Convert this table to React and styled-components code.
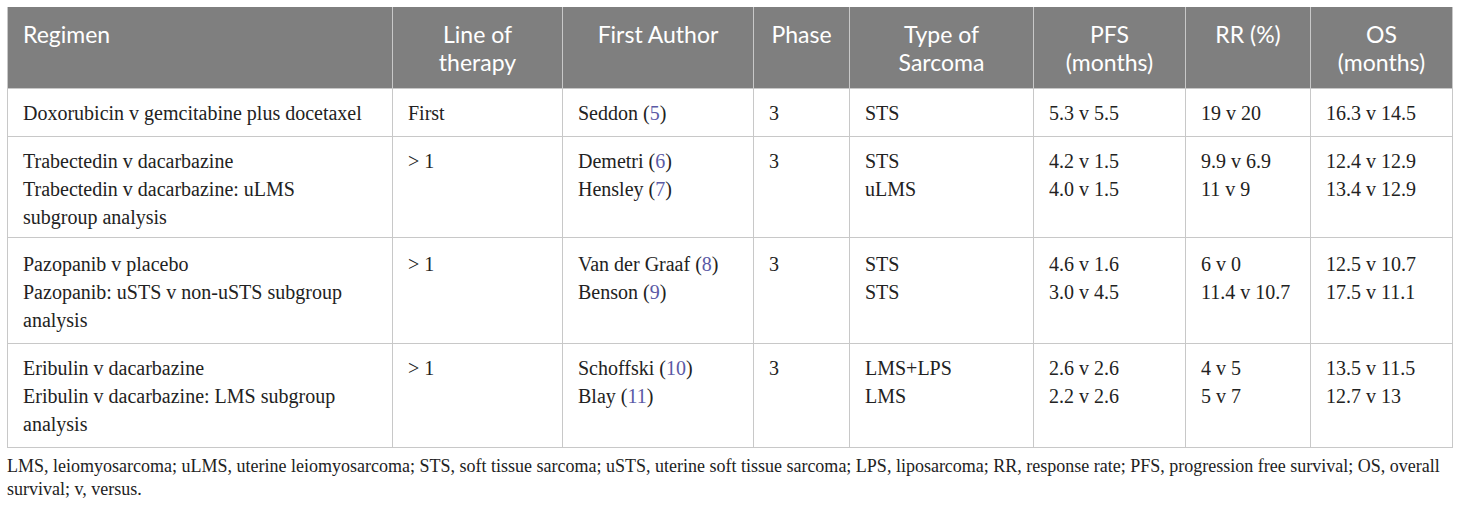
import React from 'react'
import styled, { createGlobalStyle } from 'styled-components'

const GlobalStyle = createGlobalStyle`
    html, body {
        margin: 0;
        padding: 0;
        background: #fff;
    }
`

const Wrapper = styled.div`
    width: 1460px;
    box-sizing: border-box;
    padding: 7px 8px 0 7px;
    background: #fff;
`

const Table = styled.table`
    width: 1445px;
    table-layout: fixed;
    border-collapse: collapse;
    font-family: "Liberation Serif", "Times New Roman", serif;
    font-size: 20px;
    color: #222;
`

const HeadCell = styled.th`
    background: #7f7f7f;
    color: #fff;
    font-family: Lato, "Open Sans", sans-serif;
    font-weight: 400;
    font-size: 23px;
    line-height: 28px;
    text-align: ${p => (p.$left ? 'left' : 'center')};
    vertical-align: top;
    padding: 13px 15px 6px;
    height: 81px;
    box-sizing: border-box;
    border: 1px solid #c8c8c8;
    border-top: none;
`

const Cell = styled.td`
    vertical-align: top;
    padding: ${p => p.$pt}px 24px 6px 15px;
    line-height: 28px;
    border: 1px solid #c8c8c8;
    height: ${p => p.$h}px;
    box-sizing: border-box;
`

const Line = styled.div`
    white-space: nowrap;
`

const WrapLine = styled.div``

const Ref = styled.span`
    color: #5b5aa6;
`

const Note = styled.p`
    margin: 7px 0 0;
    font-family: "Liberation Serif", "Times New Roman", serif;
    font-size: 18px;
    line-height: 23px;
    color: #222;
`

const cols = [385, 170, 191, 96, 184, 152, 125, 142]

const heads = [
    ['Regimen'],
    ['Line of', 'therapy'],
    ['First Author'],
    ['Phase'],
    ['Type of', 'Sarcoma'],
    ['PFS', '(months)'],
    ['RR (%)'],
    ['OS', '(months)'],
]

const rows = [
    {
        h: 48,
        pt: 10,
        regimen: ['Doxorubicin v gemcitabine plus docetaxel'],
        line: 'First',
        authors: [['Seddon', '5']],
        phase: '3',
        type: ['STS'],
        pfs: ['5.3 v 5.5'],
        rr: ['19 v 20'],
        os: ['16.3 v 14.5'],
    },
    {
        h: 101,
        pt: 10,
        regimen: ['Trabectedin v dacarbazine', 'Trabectedin v dacarbazine: uLMS subgroup analysis'],
        line: '> 1',
        authors: [['Demetri', '6'], ['Hensley', '7']],
        phase: '3',
        type: ['STS', 'uLMS'],
        pfs: ['4.2 v 1.5', '4.0 v 1.5'],
        rr: ['9.9 v 6.9', '11 v 9'],
        os: ['12.4 v 12.9', '13.4 v 12.9'],
    },
    {
        h: 106,
        pt: 12,
        regimen: ['Pazopanib v placebo', 'Pazopanib: uSTS v non-uSTS subgroup analysis'],
        line: '> 1',
        authors: [['Van der Graaf', '8'], ['Benson', '9']],
        phase: '3',
        type: ['STS', 'STS'],
        pfs: ['4.6 v 1.6', '3.0 v 4.5'],
        rr: ['6 v 0', '11.4 v 10.7'],
        os: ['12.5 v 10.7', '17.5 v 11.1'],
    },
    {
        h: 104,
        pt: 10,
        regimen: ['Eribulin v dacarbazine', 'Eribulin v dacarbazine: LMS subgroup analysis'],
        line: '> 1',
        authors: [['Schoffski', '10'], ['Blay', '11']],
        phase: '3',
        type: ['LMS+LPS', 'LMS'],
        pfs: ['2.6 v 2.6', '2.2 v 2.6'],
        rr: ['4 v 5', '5 v 7'],
        os: ['13.5 v 11.5', '12.7 v 13'],
    },
]

const Lines = ({ items }) => items.map((t, i) => <Line key={i}>{t}</Line>)

export default function App() {
    return (
        <Wrapper>
            <GlobalStyle />
            <Table>
                <colgroup>
                    {cols.map((w, i) => <col key={i} style={{ width: w }} />)}
                </colgroup>
                <thead>
                    <tr>
                        {heads.map((h, i) => (
                            <HeadCell key={i} $left={i === 0}>
                                {h.map((t, j) => <div key={j}>{t}</div>)}
                            </HeadCell>
                        ))}
                    </tr>
                </thead>
                <tbody>
                    {rows.map((r, i) => (
                        <tr key={i}>
                            <Cell $h={r.h} $pt={r.pt}>
                                {r.regimen.map((t, j) => <WrapLine key={j}>{t}</WrapLine>)}
                            </Cell>
                            <Cell $h={r.h} $pt={r.pt}>{r.line}</Cell>
                            <Cell $h={r.h} $pt={r.pt}>
                                {r.authors.map(([name, ref], j) => (
                                    <Line key={j}>{name} (<Ref>{ref}</Ref>)</Line>
                                ))}
                            </Cell>
                            <Cell $h={r.h} $pt={r.pt}>{r.phase}</Cell>
                            <Cell $h={r.h} $pt={r.pt}><Lines items={r.type} /></Cell>
                            <Cell $h={r.h} $pt={r.pt}><Lines items={r.pfs} /></Cell>
                            <Cell $h={r.h} $pt={r.pt}><Lines items={r.rr} /></Cell>
                            <Cell $h={r.h} $pt={r.pt}><Lines items={r.os} /></Cell>
                        </tr>
                    ))}
                </tbody>
            </Table>
            <Note>
                LMS, leiomyosarcoma; uLMS, uterine leiomyosarcoma; STS, soft tissue sarcoma; uSTS, uterine soft tissue sarcoma; LPS, liposarcoma; RR, response rate; PFS, progression free survival; OS, overall survival; v, versus.
            </Note>
        </Wrapper>
    )
}
